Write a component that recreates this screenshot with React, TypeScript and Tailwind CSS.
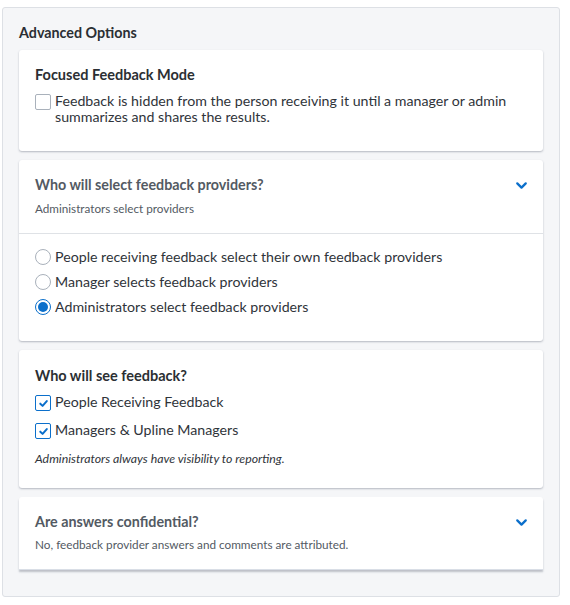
import { ChevronDown } from "lucide-react";

function Checkbox({ checked }: { checked?: boolean }) {
  return (
    <span
      className={`mt-[1px] flex h-4 w-4 shrink-0 items-center justify-center rounded-[2px] border bg-white ${
        checked ? "border-[#0b6fcb]" : "border-[#a9b1bb]"
      }`}
    >
      {checked && (
        <svg viewBox="0 0 12 12" className="h-[11px] w-[11px]">
          <path
            d="M2.5 6.2 L5 8.6 L9.6 3.4"
            fill="none"
            stroke="#0b6fcb"
            strokeWidth="2.2"
            strokeLinecap="round"
            strokeLinejoin="round"
          />
        </svg>
      )}
    </span>
  );
}

function Radio({ checked }: { checked?: boolean }) {
  return (
    <span
      className={`flex h-4 w-4 shrink-0 items-center justify-center rounded-full border bg-white ${
        checked ? "border-[#0b6fcb]" : "border-[#a9b1bb]"
      }`}
    >
      {checked && <span className="h-[10px] w-[10px] rounded-full bg-[#0b6fcb]" />}
    </span>
  );
}

const radios = [
  { label: "People receiving feedback select their own feedback providers", checked: false },
  { label: "Manager selects feedback providers", checked: false },
  { label: "Administrators select feedback providers", checked: true },
];

export default function App() {
  return (
    <div className="min-h-[605px] bg-white px-[2px] pt-[7px] font-['Lato',sans-serif] text-[#2b2f33]">
      <div className="w-[558px] rounded-[3px] border border-[#dde0e5] bg-[#f5f6f8] px-4 pb-[26px] pt-[15px]">
        <h2 className="text-[14.3px] font-bold leading-5 text-[#2b2f33]">Advanced Options</h2>

        <div className="mt-[7px] flex flex-col gap-[9px]">
          <div className="rounded-[3px] bg-white px-4 pb-[26px] pt-[15px] shadow-[0_1px_2px_rgba(60,70,90,0.35)]">
            <div className="text-[14.5px] font-bold leading-5">Focused Feedback Mode</div>
            <label className="mt-[8px] flex gap-[4px] text-[14.2px] leading-4 text-[#2f343a]">
              <Checkbox />
              <span>
                Feedback is hidden from the person receiving it until a manager or admin summarizes
                and shares the results.
              </span>
            </label>
          </div>

          <div className="rounded-[3px] bg-white shadow-[0_1px_2px_rgba(60,70,90,0.35)]">
            <div className="px-4 pb-[17px] pt-[15px]">
              <div className="flex items-center justify-between">
                <div className="text-[14.3px] font-bold leading-5 text-[#535a63]">
                  Who will select feedback providers?
                </div>
                <ChevronDown className="mr-[-3px] h-[17px] w-[17px] text-[#0b6fcb]" strokeWidth={3.2} />
              </div>
              <div className="mt-[5px] text-[11.7px] leading-4 text-[#535a63]">
                Administrators select providers
              </div>
            </div>
            <div className="border-t border-[#dfe2e6] px-4 pb-[26px] pt-[15px]">
              <div className="flex flex-col gap-[9px]">
                {radios.map((r) => (
                  <label key={r.label} className="flex items-center gap-[4px] text-[14.2px] leading-4 text-[#2f343a]">
                    <Radio checked={r.checked} />
                    <span>{r.label}</span>
                  </label>
                ))}
              </div>
            </div>
          </div>

          <div className="rounded-[3px] bg-white px-4 pb-[21px] pt-[16px] shadow-[0_1px_2px_rgba(60,70,90,0.35)]">
            <div className="text-[14.5px] font-bold leading-5">Who will see feedback?</div>
            <div className="mt-[8px] flex flex-col gap-[11px]">
              <label className="flex gap-[4px] text-[14.2px] leading-4 text-[#2f343a]">
                <Checkbox checked />
                <span>People Receiving Feedback</span>
              </label>
              <label className="flex gap-[4px] text-[14.2px] leading-4 text-[#2f343a]">
                <Checkbox checked />
                <span>Managers &amp; Upline Managers</span>
              </label>
            </div>
            <div className="mt-[12px] text-[12.3px] italic leading-4 text-[#2f343a]">
              Administrators always have visibility to reporting.
            </div>
          </div>

          <div className="rounded-t-[3px] border-b border-[#d9dee6] bg-white px-4 pb-[16px] pt-[15px] shadow-[0_2px_2px_rgba(60,70,90,0.3)]">
            <div className="flex items-center justify-between">
              <div className="text-[14.3px] font-bold leading-5 text-[#535a63]">Are answers confidential?</div>
              <ChevronDown className="mr-[-3px] h-[17px] w-[17px] text-[#0b6fcb]" strokeWidth={3.2} />
            </div>
            <div className="mt-[5px] text-[11.75px] leading-4 text-[#535a63]">
              No, feedback provider answers and comments are attributed.
            </div>
          </div>
        </div>
      </div>
    </div>
  );
}
